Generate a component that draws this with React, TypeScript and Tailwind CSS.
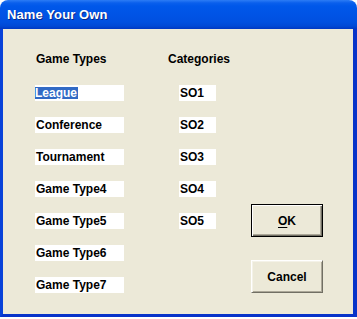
const gameTypes = ["League", "Conference", "Tournament", "Game Type4", "Game Type5", "Game Type6", "Game Type7"];
const categories = ["SO1", "SO2", "SO3", "SO4", "SO5"];

const font = "font-['Liberation_Sans',Arial,sans-serif]";

export default function App() {
  return (
    <div className="w-[357px] h-[319px] bg-white">
      <div className={`w-[357px] h-[317px] flex flex-col ${font}`}>
        {/* title bar */}
        <div className="h-[29px] shrink-0 rounded-t-[8px] bg-[linear-gradient(to_bottom,#2c7cf5_0px,#0a5fec_3px,#0058ea_6px,#0054e6_14px,#0050e0_22px,#0049d6_26px,#0038c2_29px)] flex items-center pl-[7px] pb-[1px]">
          <span className="text-white text-[13px] font-bold leading-none tracking-[0.1px] [text-shadow:1px_1px_0_#0a2a8a]">
            Name Your Own
          </span>
        </div>

        {/* body */}
        <div className="flex-1 flex bg-[#ece9d8] border-l-[3px] border-r-[4px] border-b-[3px] border-l-[#0842d9] border-r-[#0733c9] border-b-[#0733c9] text-[12px] font-bold text-black">
          {/* game types */}
          <div className="ml-[32px] w-[89px] shrink-0 flex flex-col">
            <div className="mt-[22px] h-[16px] leading-[16px] pl-[1px] whitespace-nowrap">Game Types</div>
            <div className="mt-[18px] flex flex-col gap-[16px]">
              {gameTypes.map((g, i) => (
                <div key={g} className="h-[16px] bg-white leading-[16px] whitespace-nowrap">
                  {i === 0 ? (
                    <span className="bg-[#316ac5] text-white inline-block leading-[12px] pr-[1px]">{g}</span>
                  ) : (
                    <span className="pl-[1px]">{g}</span>
                  )}
                </div>
              ))}
            </div>
          </div>

          {/* categories */}
          <div className="ml-[44px] w-[62px] shrink-0 flex flex-col">
            <div className="mt-[22px] h-[16px] leading-[16px] whitespace-nowrap">Categories</div>
            <div className="mt-[18px] flex flex-col gap-[16px]">
              {categories.map((c) => (
                <div key={c} className="ml-[11px] w-[37px] h-[16px] bg-white leading-[16px] pl-[1px]">
                  {c}
                </div>
              ))}
            </div>
          </div>

          {/* buttons */}
          <div className="ml-[21px] w-[72px] shrink-0 flex flex-col">
            <button className="mt-[175px] h-[33px] w-[72px] border border-black bg-[#ece9d8] shadow-[inset_1px_1px_0_#ffffff,inset_-1px_-1px_0_#716f64,inset_-2px_-2px_0_#aca899] flex items-center justify-center font-bold text-[12px]">
              <span>
                <span className="underline underline-offset-[2px]">O</span>K
              </span>
            </button>
            <button className="mt-[23px] h-[33px] w-[72px] bg-[#ece9d8] border-t border-l border-t-white border-l-white border-b border-r border-b-[#716f64] border-r-[#716f64] shadow-[inset_1px_1px_0_#f4f2e8,inset_-1px_-1px_0_#aca899] flex items-center justify-center font-bold text-[12px]">
              Cancel
            </button>
          </div>
        </div>
      </div>
    </div>
  );
}
